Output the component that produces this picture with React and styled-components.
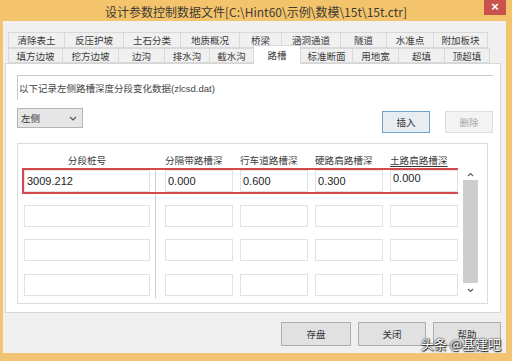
import React from 'react';
import styled, { createGlobalStyle } from 'styled-components';

const GlobalStyle = createGlobalStyle`
  html, body { margin: 0; padding: 0; }
  body {
    width: 512px;
    height: 361px;
    overflow: hidden;
    background: #f3c470;
    font-family: "Liberation Sans", "Noto Sans CJK SC", sans-serif;
  }
`;

const tabsTop = [
  { label: '清除表土', w: 57 },
  { label: '反压护坡', w: 60 },
  { label: '土石分类', w: 58 },
  { label: '地质概况', w: 60 },
  { label: '桥梁', w: 43 },
  { label: '涵洞通道', w: 60 },
  { label: '隧道', w: 47 },
  { label: '水准点', w: 48 },
  { label: '附加板块', w: 55 },
];

const tabsBottom = [
  { label: '填方边坡', w: 55 },
  { label: '挖方边坡', w: 57 },
  { label: '边沟', w: 47 },
  { label: '排水沟', w: 46 },
  { label: '截水沟', w: 45 },
  { label: '路槽', w: 48, active: true },
  { label: '标准断面', w: 53 },
  { label: '用地宽', w: 47 },
  { label: '超填', w: 47 },
  { label: '顶超填', w: 46 },
];

const headers = ['分段桩号', '分隔带路槽深', '行车道路槽深', '硬路肩路槽深', '土路肩路槽深'];

const rows = [
  ['3009.212', '0.000', '0.600', '0.300', '0.000'],
  ['', '', '', '', ''],
  ['', '', '', '', ''],
  ['', '', '', '', ''],
];

export default function App() {
  return (
    <>
      <GlobalStyle />
      <Window>
        <TitleBar>
          <Title>设计参数控制数据文件[C:\Hint60\示例\数模\15t\15t.ctr]</Title>
          <CloseButton>×</CloseButton>
        </TitleBar>
        <Client>
          <TabStrip>
            <TabRow $h={16}>
              {tabsTop.map((t) => (
                <Tab key={t.label} $w={t.w}>{t.label}</Tab>
              ))}
            </TabRow>
            <TabRow $h={15}>
              {tabsBottom.map((t) => (
                <Tab key={t.label} $w={t.w} $active={t.active}>{t.label}</Tab>
              ))}
            </TabRow>
          </TabStrip>
          <Panel>
            <InfoLabel>以下记录左侧路槽深度分段变化数据(zlcsd.dat)</InfoLabel>
            <ControlsRow>
              <Select>
                <span>左侧</span>
                <svg width="8" height="5" viewBox="0 0 8 5">
                  <polyline points="1,1 4,4 7,1" fill="none" stroke="#555" strokeWidth="1.2" />
                </svg>
              </Select>
              <ActionButtons>
                <SmallButton $focused>插入</SmallButton>
                <SmallButton $disabled>删除</SmallButton>
              </ActionButtons>
            </ControlsRow>
            <Table>
              <HeaderRow>
                {headers.map((h, i) => (
                  <HeaderCell key={h} $first={i === 0} $underline={i === 4}>{h}</HeaderCell>
                ))}
              </HeaderRow>
              <TableBody>
                <Rows>
                  {rows.map((r, ri) => (
                    <Row key={ri} $marked={ri === 0}>
                      {r.map((v, ci) => (
                        <Cell key={ci} $top={ri === 0 && ci === 4}>{v}</Cell>
                      ))}
                    </Row>
                  ))}
                </Rows>
                <ScrollBar>
                  <ScrollArrow $h={12}>
                    <svg width="7" height="5" viewBox="0 0 7 5">
                      <polyline points="1,4 3.5,1.5 6,4" fill="none" stroke="#606060" strokeWidth="1.2" />
                    </svg>
                  </ScrollArrow>
                  <Thumb />
                  <ScrollArrow $h={15}>
                    <svg width="7" height="5" viewBox="0 0 7 5">
                      <polyline points="1,1 3.5,3.5 6,1" fill="none" stroke="#606060" strokeWidth="1.2" />
                    </svg>
                  </ScrollArrow>
                </ScrollBar>
              </TableBody>
            </Table>
          </Panel>
          <ButtonBar>
            <DialogButton $w={70}>存盘</DialogButton>
            <DialogButton $w={68}>关闭</DialogButton>
            <DialogButton $w={68}>帮助</DialogButton>
          </ButtonBar>
        </Client>
        <Watermark>头条 @基建吧</Watermark>
      </Window>
    </>
  );
}

const Window = styled.div`
  position: relative;
  width: 512px;
  height: 361px;
  display: flex;
  flex-direction: column;
  background: linear-gradient(#f4c46c, #f2c373);
`;

const TitleBar = styled.div`
  position: relative;
  height: 21px;
  display: flex;
  align-items: center;
  justify-content: center;
`;

const Title = styled.div`
  font-family: "Noto Sans CJK SC", sans-serif;
  font-size: 12px;
  color: #3f3a33;
  line-height: 21px;
  padding-top: 1px;
`;

const CloseButton = styled.div`
  position: absolute;
  top: 0;
  right: 6px;
  width: 22px;
  height: 15px;
  background: #c9524c;
  color: #fff;
  font-size: 13px;
  font-weight: bold;
  line-height: 14px;
  text-align: center;
`;

const Client = styled.div`
  flex: 1;
  margin: 0 6px 8px 3px;
  background: #f0f0f0;
  display: flex;
  flex-direction: column;
  padding: 11px 5px 0 2px;
`;

const TabStrip = styled.div`
  display: flex;
  flex-direction: column;
  padding-left: 3px;
`;

const TabRow = styled.div`
  display: flex;
  height: ${(p) => p.$h}px;
`;

const Tab = styled.div`
  position: relative;
  box-sizing: border-box;
  width: ${(p) => p.$w}px;
  height: ${(p) => (p.$active ? 'calc(100% + 4px)' : '100%')};
  margin-top: ${(p) => (p.$active ? '-3px' : '0')};
  margin-right: -1px;
  border: 1px solid #d9d9d9;
  border-bottom: ${(p) => (p.$active ? 'none' : '1px solid #d9d9d9')};
  background: ${(p) => (p.$active ? '#ffffff' : '#f0f0f0')};
  z-index: ${(p) => (p.$active ? 2 : 1)};
  font-family: "Noto Sans CJK SC", sans-serif;
  font-size: 9.5px;
  color: #3a3a3a;
  display: flex;
  align-items: center;
  justify-content: center;
`;

const Panel = styled.div`
  box-sizing: border-box;
  height: 250px;
  border: 1px solid #d6d6d6;
  background: #ffffff;
  padding: 11px 7px 0 11px;
  display: flex;
  flex-direction: column;
`;

const InfoLabel = styled.div`
  box-sizing: border-box;
  height: 25px;
  border-top: 1px solid #c8c8c8;
  border-left: 1px solid #c8c8c8;
  padding: 6px 0 0 1px;
  font-size: 9.5px;
  line-height: 14px;
  color: #444;
`;

const ControlsRow = styled.div`
  margin-top: 8px;
  height: 25px;
  display: flex;
  justify-content: space-between;
  align-items: flex-start;
`;

const Select = styled.div`
  box-sizing: border-box;
  width: 66px;
  height: 20px;
  background: #e6e6e6;
  border: 1px solid #b4b4b4;
  display: flex;
  align-items: center;
  justify-content: space-between;
  padding: 0 5px 0 3px;
  font-size: 9.5px;
  color: #333;
`;

const ActionButtons = styled.div`
  display: flex;
  gap: 15px;
  margin-top: 3px;
`;

const SmallButton = styled.div`
  box-sizing: border-box;
  width: 48px;
  height: 22px;
  display: flex;
  align-items: center;
  justify-content: center;
  font-size: 9.5px;
  background: ${(p) => (p.$disabled ? '#f3f3f3' : '#e8edf2')};
  border: 1px solid ${(p) => (p.$focused ? '#6fa3d0' : p.$disabled ? '#dddddd' : '#adadad')};
  color: ${(p) => (p.$disabled ? '#a8a8a8' : '#333')};
`;

const Table = styled.div`
  box-sizing: border-box;
  margin-top: 10px;
  width: 471px;
  height: 161px;
  border: 1px solid #dcdcdc;
  padding-left: 4px;
  display: flex;
  flex-direction: column;
`;

const colTemplate = '134px 68px 68px 68px 68px';

const HeaderRow = styled.div`
  box-sizing: border-box;
  height: 24px;
  padding: 11px 0 0 2px;
  display: grid;
  grid-template-columns: ${colTemplate};
  column-gap: 7px;
  width: 436px;
`;

const HeaderCell = styled.div`
  width: ${(p) => (p.$first ? '126px' : 'auto')};
  text-align: ${(p) => (p.$first ? 'center' : 'left')};
  font-size: 9.6px;
  line-height: 12px;
  color: #3a3a3a;
  white-space: nowrap;
  span, & { text-decoration: ${(p) => (p.$underline ? 'underline' : 'none')}; }
  text-underline-offset: 2px;
  text-decoration-color: #888;
`;

const TableBody = styled.div`
  display: flex;
  align-items: flex-start;
`;

const Rows = styled.div`
  width: 436px;
  display: flex;
  flex-direction: column;
  gap: 8.5px;
  background: linear-gradient(#cfcfcf, #cfcfcf) no-repeat 133px 0 / 1px 100%;
`;

const Row = styled.div`
  box-sizing: border-box;
  height: 26px;
  border: 2px solid ${(p) => (p.$marked ? '#d44a4c' : 'transparent')};
  display: grid;
  grid-template-columns: ${colTemplate};
  column-gap: 7px;
`;

const Cell = styled.div`
  box-sizing: border-box;
  width: ${(p) => (p.$w ? `${p.$w}px` : 'auto')};
  height: 22px;
  border: 1px solid #e2e2e2;
  background: #fff;
  font-size: 11px;
  color: #222;
  padding: ${(p) => (p.$top ? '1px 0 0 2px' : '0 0 0 2px')};
  display: flex;
  align-items: ${(p) => (p.$top ? 'flex-start' : 'center')};
  &:first-child { width: 126px; }
`;

const ScrollBar = styled.div`
  margin-left: 5px;
  width: 15px;
  height: 130px;
  display: flex;
  flex-direction: column;
`;

const ScrollArrow = styled.div`
  height: ${(p) => p.$h}px;
  display: flex;
  align-items: center;
  justify-content: center;
  background: #fff;
`;

const Thumb = styled.div`
  flex: 1;
  background: #cdcdcd;
`;

const ButtonBar = styled.div`
  flex: 1;
  display: flex;
  justify-content: flex-end;
  align-items: flex-start;
  gap: 7px;
  padding-top: 9px;
`;

const DialogButton = styled.div`
  box-sizing: border-box;
  width: ${(p) => p.$w}px;
  height: 24px;
  background: #e1e1e1;
  border: 1px solid #adadad;
  display: flex;
  align-items: center;
  justify-content: center;
  font-size: 9.5px;
  color: #333;
`;

const Watermark = styled.div`
  position: absolute;
  right: 11px;
  bottom: 8px;
  font-family: "Noto Sans CJK SC", sans-serif;
  font-size: 13px;
  color: #ffffff;
  text-shadow: 0 0 1px #222, 0 0 2px #222, 1px 1px 1px #222;
  white-space: nowrap;
`;
